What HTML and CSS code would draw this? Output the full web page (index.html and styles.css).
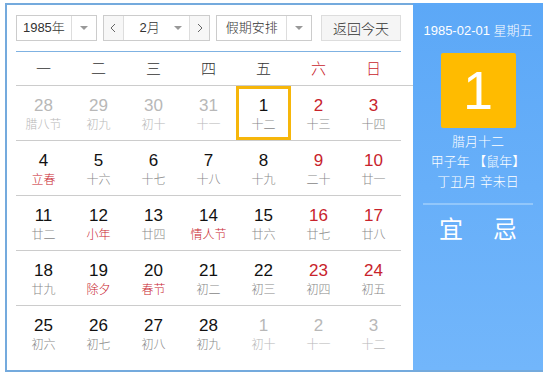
FILE: index.html
```html
<!DOCTYPE html>
<html lang="zh-CN">
<head>
  <meta charset="UTF-8">
  <title>万年历</title>
  <link rel="stylesheet" href="styles.css">
</head>
<body>
  <div class="calendar">
    <div class="main">
      <div class="toolbar">
        <div class="select year">
          <span class="label">1985年</span>
          <span class="drop"><i class="arrow"></i></span>
        </div>
        <div class="select month">
          <span class="nav"><svg width="6" height="10" viewBox="0 0 6 10"><polyline points="5,1 1,5 5,9" /></svg></span>
          <span class="label">2月</span>
          <span class="drop plain"><i class="arrow"></i></span>
          <span class="nav next"><svg width="6" height="10" viewBox="0 0 6 10"><polyline points="1,1 5,5 1,9" /></svg></span>
        </div>
        <div class="select holiday">
          <span class="label">假期安排</span>
          <span class="drop"><i class="arrow"></i></span>
        </div>
        <button class="today">返回今天</button>
      </div>

      <div class="weekdays">
        <span>一</span><span>二</span><span>三</span><span>四</span><span>五</span>
        <span class="red">六</span><span class="red">日</span>
      </div>

      <div class="days">
        <div class="day other"><b>28</b><em>腊八节</em></div>
        <div class="day other"><b>29</b><em>初九</em></div>
        <div class="day other"><b>30</b><em>初十</em></div>
        <div class="day other"><b>31</b><em>十一</em></div>
        <div class="day current"><b>1</b><em>十二</em></div>
        <div class="day weekend"><b>2</b><em>十三</em></div>
        <div class="day weekend"><b>3</b><em>十四</em></div>

        <div class="day"><b>4</b><em class="fest">立春</em></div>
        <div class="day"><b>5</b><em>十六</em></div>
        <div class="day"><b>6</b><em>十七</em></div>
        <div class="day"><b>7</b><em>十八</em></div>
        <div class="day"><b>8</b><em>十九</em></div>
        <div class="day weekend"><b>9</b><em>二十</em></div>
        <div class="day weekend"><b>10</b><em>廿一</em></div>

        <div class="day"><b>11</b><em>廿二</em></div>
        <div class="day"><b>12</b><em class="fest">小年</em></div>
        <div class="day"><b>13</b><em>廿四</em></div>
        <div class="day"><b>14</b><em class="fest">情人节</em></div>
        <div class="day"><b>15</b><em>廿六</em></div>
        <div class="day weekend"><b>16</b><em>廿七</em></div>
        <div class="day weekend"><b>17</b><em>廿八</em></div>

        <div class="day"><b>18</b><em>廿九</em></div>
        <div class="day"><b>19</b><em class="fest">除夕</em></div>
        <div class="day"><b>20</b><em class="fest">春节</em></div>
        <div class="day"><b>21</b><em>初二</em></div>
        <div class="day"><b>22</b><em>初三</em></div>
        <div class="day weekend"><b>23</b><em>初四</em></div>
        <div class="day weekend"><b>24</b><em>初五</em></div>

        <div class="day last"><b>25</b><em>初六</em></div>
        <div class="day last"><b>26</b><em>初七</em></div>
        <div class="day last"><b>27</b><em>初八</em></div>
        <div class="day last"><b>28</b><em>初九</em></div>
        <div class="day last other"><b>1</b><em>初十</em></div>
        <div class="day last other"><b>2</b><em>十一</em></div>
        <div class="day last other"><b>3</b><em>十二</em></div>
      </div>
    </div>

    <div class="side">
      <p class="date">1985-02-01 星期五</p>
      <div class="big">1</div>
      <p class="lunar">腊月十二</p>
      <p class="lunar">甲子年 【鼠年】</p>
      <p class="lunar">丁丑月 辛未日</p>
      <div class="divider"></div>
      <div class="yiji"><span>宜</span><span>忌</span></div>
    </div>
  </div>
</body>
</html>
```

FILE: styles.css
```css
body {
  margin: 0;
  background: #fff;
  font-family: "Liberation Sans", "Noto Sans CJK SC", sans-serif;
  color: #111;
}
.calendar {
  display: flex;
  width: 538px;
  height: 369px;
  margin: 3px 0 0 5px;
  box-sizing: border-box;
  border-left: 2px solid #74aadd;
  border-bottom: 2px solid #74aadd;
}
.main {
  width: 406px;
  box-sizing: border-box;
  border-top: 2px solid #74aadd;
  padding: 10px 0 0 9px;
}
.toolbar {
  display: flex;
  height: 26px;
  padding-bottom: 10px;
  border-bottom: 1px solid #7fb2e2;
  width: 385px;
}
.select {
  display: flex;
  align-items: stretch;
  box-sizing: border-box;
  height: 26px;
  border: 1px solid #ccc;
  background: #fff;
  font-size: 13px;
  font-weight: 300;
  color: #333;
  line-height: 24px;
}
.select .label {
  flex: 1;
  text-align: center;
}
.drop {
  width: 24px;
  border-left: 1px solid #ddd;
  display: flex;
  align-items: center;
  justify-content: center;
}
.drop.plain {
  border-left: 0;
  width: 22px;
}
.arrow {
  width: 0;
  height: 0;
  border-left: 4px solid transparent;
  border-right: 4px solid transparent;
  border-top: 4px solid #999;
}
.year {
  width: 81px;
  margin-right: 6px;
}
.month {
  width: 108px;
  margin-right: 6px;
}
.month .label {
  padding-left: 8px;
}
.nav {
  width: 19px;
  display: flex;
  align-items: center;
  justify-content: center;
  background: #f7f7f7;
  border-right: 1px solid #ddd;
}
.nav.next {
  border-right: 0;
  border-left: 1px solid #ddd;
}
.nav polyline {
  fill: none;
  stroke: #666;
  stroke-width: 1;
}
.holiday {
  width: 96px;
  margin-right: 9px;
}
.today {
  width: 80px;
  height: 26px;
  padding: 0;
  border: 1px solid #ddd;
  background: #f5f5f5;
  font-family: inherit;
  font-size: 14px;
  font-weight: 300;
  color: #333;
}
.weekdays {
  display: grid;
  grid-template-columns: repeat(7, 55px);
  height: 33px;
  border-bottom: 1px solid #ccc;
  font-size: 15px;
  font-weight: 300;
  line-height: 33px;
  text-align: center;
  color: #333;
}
.red {
  color: #c8232c;
}
.days {
  display: grid;
  grid-template-columns: repeat(7, 55px);
}
.day {
  height: 55px;
  box-sizing: border-box;
  padding-top: 10px;
  border-bottom: 1px solid #ccc;
  text-align: center;
}
.day.last {
  border-bottom: 0;
}
.day b {
  display: block;
  font-weight: normal;
  font-size: 17px;
  line-height: 20px;
  color: #111;
}
.day em {
  display: block;
  font-style: normal;
  font-size: 12px;
  font-weight: 300;
  line-height: 18px;
  color: #888;
}
.day.weekend b {
  color: #c8232c;
}
.day em.fest {
  color: #c8232c;
}
.day.other b,
.day.other em {
  color: #b8b8b8;
}
.day.current {
  box-shadow: inset 0 0 0 3px #f6b60a;
}
.side {
  width: 130px;
  background: linear-gradient(#5ca8f7, #72b6fb);
  color: #fff;
  text-align: center;
  padding-top: 17px;
  box-sizing: border-box;
}
.side p {
  margin: 0;
}
.date {
  font-size: 13px;
  font-weight: 300;
  line-height: 22px;
}
.big {
  width: 75px;
  height: 75px;
  margin: 11px auto 4px;
  background: #ffbb00;
  border-radius: 2px;
  font-size: 54px;
  line-height: 75px;
}
.lunar {
  font-size: 13px;
  font-weight: 300;
  line-height: 20px;
}
.divider {
  height: 2px;
  margin: 11px 10px 0;
  background: #92c7fb;
}
.yiji {
  display: flex;
  justify-content: center;
  gap: 30px;
  margin-top: 10px;
  font-size: 24px;
  line-height: 30px;
}
```
